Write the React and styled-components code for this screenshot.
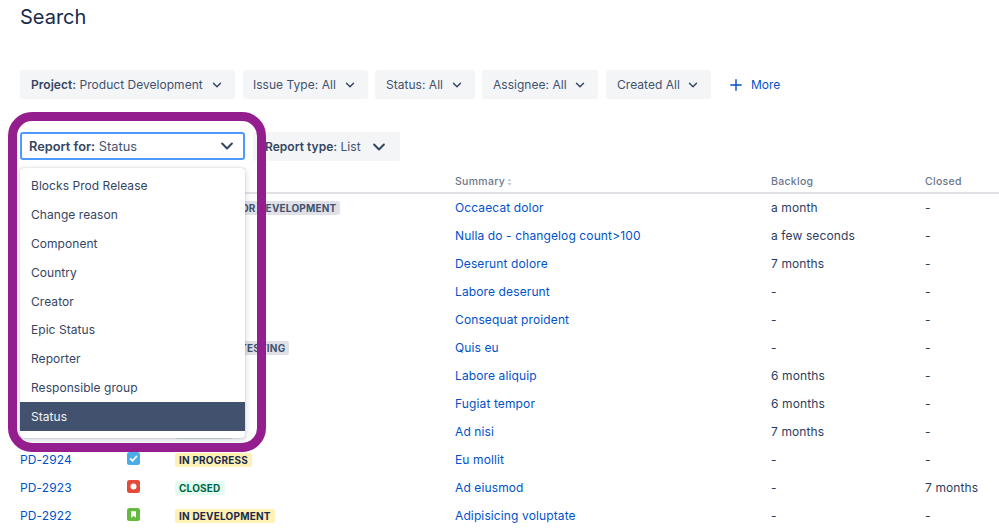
import React from 'react';
import styled, { createGlobalStyle } from 'styled-components';

const GlobalStyle = createGlobalStyle`
  html, body {
    margin: 0;
    padding: 0;
    background: #fff;
    overflow: hidden;
  }
  body {
    font-family: Inter, "Liberation Sans", sans-serif;
    color: #172b4d;
  }
`;

const Page = styled.div`
  position: relative;
  width: 999px;
  height: 532px;
  overflow: hidden;
  padding-left: 20px;
  box-sizing: border-box;
`;

const Title = styled.h1`
  margin: 0;
  height: 70px;
  padding-top: 5px;
  box-sizing: border-box;
  font-size: 20px;
  line-height: 24px;
  font-weight: 400;
  color: #172b4d;
`;

const FilterRow = styled.div`
  display: flex;
  align-items: center;
  height: 29px;
`;

const FilterButton = styled.button`
  display: flex;
  align-items: center;
  justify-content: space-between;
  width: ${props => props.$width}px;
  height: 29px;
  margin-right: ${props => props.$gap}px;
  padding: 0 ${props => props.$right}px 0 ${props => props.$left}px;
  box-sizing: border-box;
  border: 0;
  border-radius: 3px;
  background: #f4f5f7;
  color: #42526e;
  font-family: inherit;
  font-size: 12px;
  letter-spacing: 0.03px;
  white-space: nowrap;

  b {
    font-weight: 600;
    color: #344563;
  }
`;

const MoreButton = styled.div`
  display: flex;
  align-items: center;
  gap: 9px;
  margin-left: 19px;
  color: #0052cc;
  font-size: 12px;
`;

const ReportRow = styled.div`
  display: flex;
  gap: 8px;
  margin-top: 33px;
  height: 29px;
`;

const ReportSlot = styled.div`
  position: relative;
  width: 225px;
`;

const ReportSelect = styled.div`
  display: flex;
  align-items: center;
  justify-content: space-between;
  height: 28px;
  padding: 0 9px 0 7px;
  box-sizing: border-box;
  border: 2px solid #4c9aff;
  border-radius: 3px;
  background: #fff;
  font-size: 12.8px;
  color: #42526e;

  b {
    font-weight: 600;
    color: #344563;
  }
`;

const Menu = styled.ul`
  position: absolute;
  z-index: 2;
  top: 36px;
  left: 0;
  width: 225px;
  height: 270px;
  margin: 0;
  padding: 3.5px 0 0;
  box-sizing: border-box;
  list-style: none;
  background: #fff;
  border-radius: 3px;
  box-shadow: 0 0 1px rgba(9, 30, 66, 0.45), 0 2px 6px rgba(9, 30, 66, 0.2);
`;

const MenuItem = styled.li`
  display: flex;
  align-items: center;
  height: 28.8px;
  padding-left: 11px;
  font-size: 12px;
  letter-spacing: 0.05px;
  color: ${props => (props.$selected ? '#f4f5f7' : '#344563')};
  background: ${props => (props.$selected ? '#42526e' : 'transparent')};
`;

const Ring = styled.div`
  position: absolute;
  z-index: 3;
  left: 8px;
  top: 112px;
  width: 258px;
  height: 340px;
  box-sizing: border-box;
  border: 9px solid #951e8e;
  border-radius: 24px;
  pointer-events: none;
`;

const Table = styled.div`
  margin-top: 9px;
  width: 1100px;
`;

const Columns = styled.div`
  display: grid;
  grid-template-columns: 107px 48px 280px 316px 154px 1fr;
  align-items: center;
  box-sizing: border-box;
`;

const HeadRow = styled(Columns)`
  height: 24px;
  padding-top: 1px;
  border-bottom: 2px solid #dfe1e6;
`;

const Row = styled(Columns)`
  height: 28px;
  padding-bottom: 2px;
  font-size: 12px;
  letter-spacing: 0.12px;
`;

const HeadCell = styled.div`
  display: flex;
  align-items: center;
  gap: 2px;
  font-size: 10.5px;
  font-weight: 500;
  letter-spacing: 0.3px;
  color: #6b778c;
`;

const Link = styled.a`
  color: #0052cc;
  text-decoration: none;
  white-space: nowrap;
`;

const Text = styled.span`
  color: #2c3e5d;
`;

const IconCell = styled.span`
  display: flex;
  margin-bottom: 1px;
`;

const Lozenge = styled.span`
  justify-self: start;
  display: inline-block;
  height: 14px;
  line-height: 14px;
  margin-top: 2px;
  padding: 0 4px;
  border-radius: 3px;
  font-size: 10px;
  font-weight: 700;
  letter-spacing: 0.2px;
  white-space: nowrap;
  color: ${props => props.$color};
  background: ${props => props.$bg};
`;

const tones = {
  grey: { color: '#42526e', bg: '#dfe1e6' },
  yellow: { color: '#172b4d', bg: '#fff0b3' },
  green: { color: '#006644', bg: '#e3fcef' },
};

const Chevron = ({ size = 10 }) => (
  <svg width={size} height={size} viewBox="0 0 12 12" fill="none">
    <path d="M1.8 3.9 6 8.1l4.2-4.2" stroke="#344563" strokeWidth="1.7" strokeLinecap="round" strokeLinejoin="round" />
  </svg>
);

const Plus = () => (
  <svg width="12" height="12" viewBox="0 0 12 12" fill="none">
    <path d="M6 .8v10.4M.8 6h10.4" stroke="#0052cc" strokeWidth="1.4" strokeLinecap="round" />
  </svg>
);

const SortIcon = () => (
  <svg width="5" height="8" viewBox="0 0 5 8">
    <path d="M2.5.5 4.5 3h-4zM2.5 7.5.5 5h4z" fill="#c1c7d0" />
  </svg>
);

const TypeIcon = ({ kind }) => {
  if (kind === 'bug') {
    return (
      <svg width="13" height="13" viewBox="0 0 13 13">
        <rect width="13" height="13" rx="2.5" fill="#e5493a" />
        <circle cx="6.5" cy="6.5" r="3" fill="#fff" />
      </svg>
    );
  }
  if (kind === 'story') {
    return (
      <svg width="13" height="13" viewBox="0 0 13 13">
        <rect width="13" height="13" rx="2.5" fill="#63ba3c" />
        <path d="M4 3.2h5v6.6L6.5 8 4 9.8z" fill="#fff" />
      </svg>
    );
  }
  return (
    <svg width="13" height="13" viewBox="0 0 13 13" fill="none">
      <rect width="13" height="13" rx="2.5" fill="#4bade8" />
      <path d="m3.6 6.8 2 2 3.9-4.4" stroke="#fff" strokeWidth="1.7" strokeLinecap="round" strokeLinejoin="round" />
    </svg>
  );
};

const filters = [
  { label: 'Project:', value: ' Product Development', width: 215, gap: 8, left: 11 },
  { label: '', value: 'Issue Type: All', width: 125, gap: 7, left: 10 },
  { label: '', value: 'Status: All', width: 100, gap: 7, left: 11 },
  { label: '', value: 'Assignee: All', width: 116, gap: 8, left: 11 },
  { label: '', value: 'Created All', width: 105, gap: 0, left: 11 },
];

const menuItems = [
  'Blocks Prod Release',
  'Change reason',
  'Component',
  'Country',
  'Creator',
  'Epic Status',
  'Reporter',
  'Responsible group',
  'Status',
];

// the rows behind the open menu only carry what shows past its edges
const rows = [
  { status: 'SELECTED FOR DEVELOPMENT', tone: 'grey', summary: 'Occaecat dolor', backlog: 'a month', closed: '-' },
  { summary: 'Nulla do - changelog count>100', backlog: 'a few seconds', closed: '-' },
  { summary: 'Deserunt dolore', backlog: '7 months', closed: '-' },
  { summary: 'Labore deserunt', backlog: '-', closed: '-' },
  { summary: 'Consequat proident', backlog: '-', closed: '-' },
  { status: 'READY FOR TESTING', tone: 'grey', summary: 'Quis eu', backlog: '-', closed: '-' },
  { summary: 'Labore aliquip', backlog: '6 months', closed: '-' },
  { summary: 'Fugiat tempor', backlog: '6 months', closed: '-' },
  { status: 'BACKLOG', tone: 'grey', summary: 'Ad nisi', backlog: '7 months', closed: '-' },
  { id: 'PD-2924', type: 'task', status: 'IN PROGRESS', tone: 'yellow', summary: 'Eu mollit', backlog: '-', closed: '-' },
  { id: 'PD-2923', type: 'bug', status: 'CLOSED', tone: 'green', summary: 'Ad eiusmod', backlog: '-', closed: '7 months' },
  { id: 'PD-2922', type: 'story', status: 'IN DEVELOPMENT', tone: 'yellow', summary: 'Adipisicing voluptate', backlog: '-', closed: '-' },
];

export default function App() {
  return (
    <Page>
      <GlobalStyle />
      <Title>Search</Title>

      <FilterRow>
        {filters.map(f => (
          <FilterButton key={f.value} $width={f.width} $gap={f.gap} $left={f.left} $right={13}>
            <span>
              {f.label && <b>{f.label}</b>}
              {f.value}
            </span>
            <Chevron />
          </FilterButton>
        ))}
        <MoreButton>
          <Plus />
          More
        </MoreButton>
      </FilterRow>

      <ReportRow>
        <ReportSlot>
          <ReportSelect>
            <span>
              <b>Report for:</b> Status
            </span>
            <Chevron size={14} />
          </ReportSelect>
          <Menu>
            {menuItems.map(item => (
              <MenuItem key={item} $selected={item === 'Status'}>
                {item}
              </MenuItem>
            ))}
          </Menu>
        </ReportSlot>
        <FilterButton $width={147} $gap={0} $left={12} $right={14}>
          <span>
            <b>Report type:</b> List
          </span>
          <Chevron size={14} />
        </FilterButton>
      </ReportRow>

      <Table>
        <HeadRow>
          <span />
          <span />
          <span />
          <HeadCell>
            Summary
            <SortIcon />
          </HeadCell>
          <HeadCell>Backlog</HeadCell>
          <HeadCell>Closed</HeadCell>
        </HeadRow>
        {rows.map(r => (
          <Row key={r.summary}>
            {r.id ? <Link>{r.id}</Link> : <span />}
            {r.type ? (
              <IconCell>
                <TypeIcon kind={r.type} />
              </IconCell>
            ) : (
              <span />
            )}
            {r.status ? (
              <Lozenge $color={tones[r.tone].color} $bg={tones[r.tone].bg}>
                {r.status}
              </Lozenge>
            ) : (
              <span />
            )}
            <Link>{r.summary}</Link>
            <Text>{r.backlog}</Text>
            <Text>{r.closed}</Text>
          </Row>
        ))}
      </Table>

      <Ring />
    </Page>
  );
}
